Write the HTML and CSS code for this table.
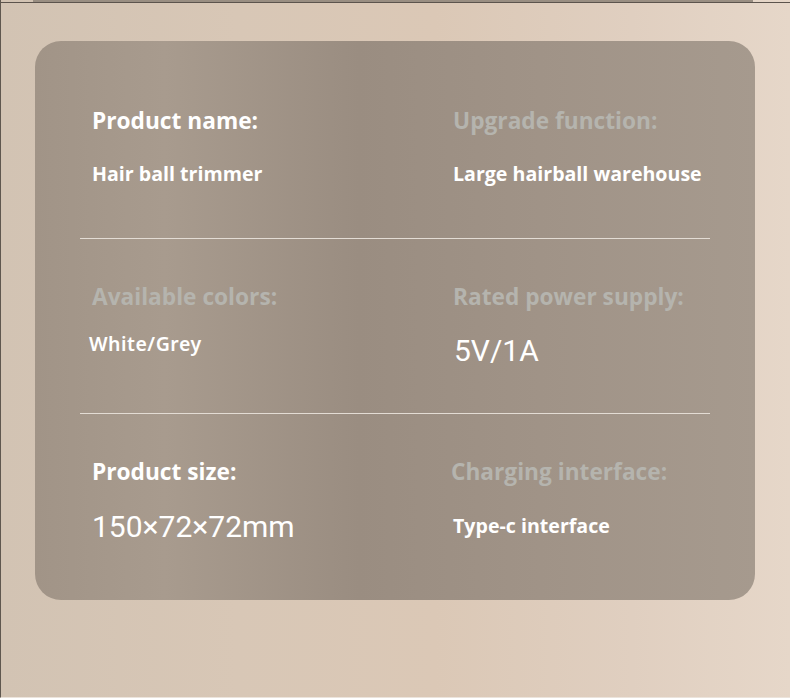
FILE: index.html
```html
<!DOCTYPE html>
<html lang="en">
<head>
<meta charset="utf-8">
<title>Product parameters</title>
<link rel="stylesheet" href="styles.css">
</head>
<body>
<div class="page">
  <div class="topband"></div>
  <div class="topline"></div>
  <div class="card">
    <section class="spec spec-first">
      <div class="cell">
        <div class="label label-white">Product name:</div>
        <div class="value value-bold">Hair ball trimmer</div>
      </div>
      <div class="cell">
        <div class="label">Upgrade function:</div>
        <div class="value value-bold">Large hairball warehouse</div>
      </div>
    </section>
    <div class="divider"></div>
    <section class="spec">
      <div class="cell">
        <div class="label">Available colors:</div>
        <div class="value value-semi">White/Grey</div>
      </div>
      <div class="cell">
        <div class="label">Rated power supply:</div>
        <div class="value value-big value-low">5V/1A</div>
      </div>
    </section>
    <div class="divider"></div>
    <section class="spec">
      <div class="cell">
        <div class="label label-white">Product size:</div>
        <div class="value value-big value-size">150×72×72mm</div>
      </div>
      <div class="cell cell-shift">
        <div class="label">Charging interface:</div>
        <div class="value value-bold value-unshift">Type-c interface</div>
      </div>
    </section>
  </div>
</div>
</body>
</html>
```
FILE: styles.css
```css
html, body {
  margin: 0;
  padding: 0;
}
body {
  width: 790px;
  height: 698px;
  overflow: hidden;
  font-family: "Open Sans", "Noto Sans", sans-serif;
}
.page {
  height: 697px;
  border-left: 1px solid #5f574f;
  border-bottom: 1px solid #ece4dc;
  background: linear-gradient(90deg, #d2c3b3 0%, #d8c7b6 30%, #dbc8b6 55%, #e0cfc0 80%, #e6d7c9 100%);
}
.topband {
  height: 2px;
  margin: 0 37px 0 32px;
  background: #998e82;
}
.topline {
  height: 1px;
  background: #5c544d;
}
.card {
  margin: 38px 0 0 34px;
  width: 720px;
  height: 559px;
  border-radius: 26px;
  background: linear-gradient(90deg, #a19487 0%, #a89b8e 18%, #9a8d81 45%, #a09387 70%, #a69a8e 100%);
}
.spec {
  display: grid;
  grid-template-columns: 361px 1fr;
  padding-left: 57px;
  padding-top: 43px;
  height: 131px;
}
.spec-first {
  padding-top: 65px;
  height: 132px;
}
.cell-shift {
  margin-left: -2px;
}
.label {
  font-size: 22.7px;
  font-weight: 700;
  line-height: 30px;
  color: #b5b4ae;
}
.label-white {
  color: #ffffff;
}
.value {
  margin-top: 23px;
  color: #ffffff;
  line-height: 30px;
}
.value-bold {
  font-size: 19.6px;
  font-weight: 700;
}
.value-unshift {
  margin-left: 2px;
  margin-top: 24px;
}
.value-semi {
  margin-top: 17px;
  margin-left: -3px;
  font-family: "Noto Sans", sans-serif;
  font-size: 19.5px;
  font-weight: 600;
  letter-spacing: 0.5px;
}
.value-big {
  font-family: Roboto, "Noto Sans", sans-serif;
  font-size: 30px;
  font-weight: 400;
}
.value-low {
  margin-top: 24px;
  margin-left: 1px;
}
.value-size {
  margin-top: 25px;
}
.divider {
  margin-left: 45px;
  width: 630px;
  height: 1px;
  background: #e3dcd4;
}
```
